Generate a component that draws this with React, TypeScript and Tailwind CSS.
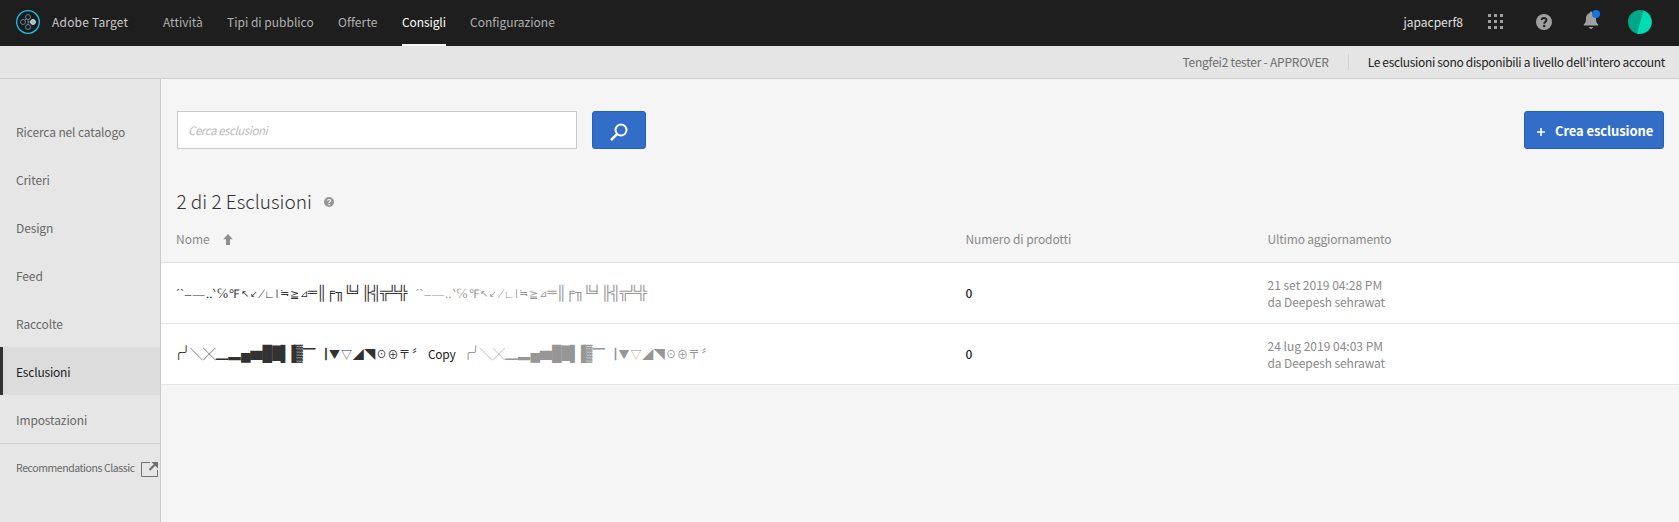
const nav = [
  { label: 'Attività', cls: 'w-[40px] text-[#b0b0b0]' },
  { label: 'Tipi di pubblico', cls: 'w-[87px] text-[#b0b0b0]' },
  { label: 'Offerte', cls: 'w-[40px] tracking-[0.1px] text-[#b0b0b0]' },
  { label: 'Consigli', cls: 'w-[44px] tracking-[-0.1px] text-white shadow-[inset_0_-2px_0_#f5f5f5]' },
  { label: 'Configurazione', cls: 'w-[87px] text-[#b0b0b0]' },
];

const sideItems = ['Ricerca nel catalogo', 'Criteri', 'Design', 'Feed', 'Raccolte', 'Esclusioni', 'Impostazioni'];

type Cell = [string, string];

const serif = "font-['Liberation_Serif',serif]";
const mono = "font-['Liberation_Mono',monospace] text-[15px]";
const block = "font-['Liberation_Mono',monospace] text-[16px]";
const wide = 'text-[12.5px]';

const symbolsA: Cell[] = [
  ['ˊ', `w-[4px] text-[12px] ${serif}`],
  ['ˋ', `w-[4px] text-[12px] ${serif}`],
  ['–', `w-[8px] text-[13px] ${serif}`],
  ['—', `w-[13px] text-[12px] ${serif}`],
  ['‥', `w-[7.5px] text-[12px] ${serif}`],
  ['‵', `w-[4px] text-[13px] ${serif}`],
  ['℅', `w-[12px] text-[14px] ${serif}`],
  ['℉', `w-[11.5px] text-[12px] ${serif}`],
  ['↖', `w-[9.5px] text-[9.5px] ${serif}`],
  ['↙', `w-[8.5px] text-[9px] ${serif}`],
  ['∕', `w-[7px] text-[13px] ${serif}`],
  ['∟', `w-[9.5px] text-[11px] ${serif}`],
  ['∣', 'w-[5px] text-[12px]'],
  ['≒', `w-[9.5px] text-[10.5px] ${serif}`],
  ['≧', `w-[10px] text-[11px] ${serif}`],
  ['⊿', `w-[9px] text-[10px] ${serif}`],
  ...[...'═║╒╖╚╛╟╣╦╩╬'].map((c): Cell => [c, `w-[9px] ${mono}`]),
];

const symbolsB: Cell[] = [
  ['╭', "-ml-[1px] w-[7.4px] font-['Liberation_Mono',monospace] text-[12.3px]"],
  ['╯', "w-[7.4px] font-['Liberation_Mono',monospace] text-[12.3px]"],
  ['╲', `w-[13px] ${wide}`],
  ['╳', `w-[13px] ${wide}`],
  ['▁', `w-[12.5px] ${wide}`],
  ['▂', `w-[12.5px] ${wide}`],
  ['▄', `w-[10px] ${block}`],
  ['▆', `w-[11.5px] ${wide}`],
  ['█', `w-[10px] ${block}`],
  ['▇', "w-[9px] font-['Liberation_Mono',monospace] text-[15px]"],
  ['▌', `w-[8px] ${block}`],
  ['▐', `w-[4px] ${block}`],
  ['▓', `w-[9.6px] ${block}`],
  ['▔', `w-[12.5px] ${wide}`],
  ['▕', 'w-[10px] text-[12.5px]'],
  ['▼', 'ml-[3px] w-[12px] text-[11px]'],
  ['▽', 'w-[12px] text-[11px]'],
  ['◢', 'w-[11.5px] text-[11px]'],
  ['◥', 'w-[11.5px] text-[11px]'],
  ['☉', 'w-[12px] text-[12px]'],
  ['⊕', 'w-[11px] text-[11px]'],
  ['〒', 'w-[12px] text-[12px]'],
  ['〞', 'ml-[3px] w-[10px] text-[13px]'],
];

function Symbols({ cells, className }: { cells: Cell[]; className: string }) {
  return (
    <span className={`flex h-5 items-center ${className}`}>
      {cells.map(([char, cls]) => (
        <span key={char} className={`flex shrink-0 justify-center leading-5 ${cls}`}>
          <span className="whitespace-nowrap">{char}</span>
        </span>
      ))}
    </span>
  );
}

function HelpIcon({ className, mark }: { className: string; mark: string }) {
  return (
    <svg viewBox="0 0 16 16" className={className}>
      <circle cx="8" cy="8" r="8" fill="currentColor" />
      <path d="M5.6 6C5.6 3.3 10.5 3.3 10.5 6C10.5 7.7 8.2 7.7 8.2 9.7" fill="none" stroke={mark} strokeWidth="1.9" />
      <rect x="7.1" y="10.9" width="2.2" height="2.2" fill={mark} />
    </svg>
  );
}

function TargetLogo() {
  return (
    <svg viewBox="0 0 24 24" className="-mt-0.5 size-6" fill="none">
      <circle cx="12" cy="12" r="11.3" fill="#111d22" stroke="#1cc4e8" strokeWidth="1.3" />
      <g stroke="#8d9598" strokeWidth="0.8">
        <circle cx="12" cy="7" r="2.5" />
        <circle cx="7" cy="12" r="2.5" />
        <circle cx="12" cy="17" r="2.5" />
        <path d="M12 9.5v5M8.8 10.3l1.6-1.7M14.5 12h-2.5" />
      </g>
      <circle cx="17" cy="12" r="2.4" fill="#9fb6c0" stroke="#dce8ed" />
    </svg>
  );
}

function Header() {
  return (
    <header className="flex h-[46px] items-center bg-[#1e1e1e] pl-4 pr-[27px] text-[12px]">
      <TargetLogo />
      <span className="ml-3 w-[111px] pb-0.5 tracking-[0.2px] text-[#cacaca]">Adobe Target</span>
      <nav className="flex h-full gap-6">
        {nav.map((n) => (
          <a key={n.label} className={`flex h-full items-center whitespace-nowrap pb-0.5 ${n.cls}`}>{n.label}</a>
        ))}
      </nav>
      <span className="ml-auto pb-0.5 text-[#e0e0e0]">japacperf8</span>
      <svg viewBox="0 0 15 15" className="-mt-[3px] ml-[25px] h-[15px] w-[15px]" fill="#a0a0a0">
        {[0, 6, 12].map((y) => [0, 6, 12].map((x) => <rect key={`${x}-${y}`} x={x} y={y} width="3" height="3" />))}
      </svg>
      <HelpIcon className="-mt-0.5 ml-[33px] size-4 text-[#a0a0a0]" mark="#1e1e1e" />
      <svg viewBox="0 0 18 20" className="-mt-[6px] ml-[31px] h-5 w-[18px]">
        <path d="M0.8 15.5v-1C2.6 13 3 11.6 3 8.6C3 5.6 4.4 3.8 6.6 3.1C6.6 1 9.4 1 9.4 3.1C11.6 3.8 13 5.6 13 8.6C13 11.6 13.4 13 15.2 14.5v1zM6 17h4C9.8 19.4 6.2 19.4 6 17z" fill="#a0a0a0" />
        <circle cx="13" cy="4" r="4" fill="#1473e6" />
      </svg>
      <svg viewBox="0 0 24 24" className="-mt-0.5 ml-[27px] size-6">
        <circle cx="12" cy="12" r="12" fill="#00a888" />
        <path d="M15.6 0.6A12 12 0 0 1 9 23.6z" fill="#00dcb4" />
      </svg>
    </header>
  );
}

function Sidebar() {
  return (
    <aside className="w-[161px] shrink-0 border-r border-[#cbcbcb] bg-[#e6e6e6] pt-7 text-[12px] tracking-[-0.12px] text-[#686868]">
      {sideItems.map((label) => (
        <a
          key={label}
          className={`flex h-12 items-center whitespace-nowrap pt-px ${
            label === 'Esclusioni' ? 'border-l-[3px] border-[#323232] bg-[#dcdcdc] pl-[13px] tracking-[-0.2px] text-[#222]' : 'pl-4'
          }`}
        >
          {label}
        </a>
      ))}
      <div className="flex h-[50px] items-center border-t border-[#d2d2d2] pl-4">
        <span className="w-[125px] whitespace-nowrap pb-0.5 text-[10.5px] tracking-[-0.42px]">Recommendations Classic</span>
        <svg viewBox="0 0 17 15" className="mt-px h-[15px] w-[17px] shrink-0" fill="none" stroke="#707070">
          <path d="M9 0.5H0.5v14h16V8" />
          <path d="M8.5 8L14 2.5" strokeWidth="2.2" />
          <path d="M10.5 0H17v6.5z" fill="#707070" stroke="none" />
        </svg>
      </div>
    </aside>
  );
}

const columns = 'grid grid-cols-[789.5px_302px_1fr] pl-[15px]';

function Updated({ date }: { date: string }) {
  return (
    <div className="leading-[17px] text-[#8a8a8a]">
      {date}
      <br />
      <span className="tracking-[-0.1px]">da Deepesh sehrawat</span>
    </div>
  );
}

export default function App() {
  return (
    <div className="flex h-[522px] flex-col overflow-hidden bg-[#f5f5f5] font-['Noto_Sans_CJK_SC',sans-serif] leading-5">
      <Header />
      <div className="flex h-[33px] items-center justify-end border-b border-[#cfcfcf] bg-[#e5e5e5] pr-[14px] text-[12px]">
        <span className="tracking-[-0.23px] text-[#6e6e6e]">Tengfei2 tester - APPROVER</span>
        <span className="ml-[19px] mr-[19px] h-4 w-px bg-[#d0d0d0]" />
        <span className="tracking-[-0.33px] text-[#222]">Le esclusioni sono disponibili a livello dell'intero account</span>
      </div>
      <div className="flex grow">
        <Sidebar />
        <main className="grow text-[12px]">
          <div className="flex h-[70px] items-end pl-4 pr-[15px]">
            <div className="flex h-[38px] w-[400px] items-center border border-[#cacaca] bg-white pl-[10px] text-[11.5px] italic tracking-[-0.45px] text-[#bcbcbc]">
              Cerca esclusioni
            </div>
            <button className="ml-[15px] flex h-[38px] w-[54px] items-center justify-center rounded-[3px] border border-[#2360b8] bg-[#326ec8] pt-1">
              <svg viewBox="0 0 18 18" className="size-[18px]" fill="none" stroke="white" strokeWidth="2">
                <circle cx="11" cy="7" r="5.5" />
                <path d="M7 11.2L1 17.2" strokeWidth="2.4" />
              </svg>
            </button>
            <button className="ml-auto flex h-[38px] w-[140px] items-center whitespace-nowrap rounded-[3px] border border-[#2360b8] bg-[#326ec8] pl-3 pt-0.5 text-[13px] font-bold tracking-[-0.1px] text-white">
              <svg viewBox="0 0 8 8" className="mr-[10px] mt-0.5 size-2" stroke="white" strokeWidth="1.6">
                <path d="M4 0v8M0 4h8" />
              </svg>
              <span>Crea esclusione</span>
            </button>
          </div>
          <div className="flex items-center pl-[15.5px] pt-10 text-[#323232]">
            <h1 className="text-[19px] font-light leading-6">2 di 2 Esclusioni</h1>
            <HelpIcon className="ml-[12.5px] mt-px size-[10px] text-[#969696]" mark="#f5f5f5" />
          </div>
          <div className={`${columns} mt-[16px] h-[34px] border-b border-[#e0e0e0] text-[#8a8a8a]`}>
            <span className="flex h-5 items-center">
              Nome
              <svg viewBox="0 0 10 11" className="ml-[13px] h-[11px] w-[10px]" fill="#8e8e8e">
                <path d="M5 0L9.8 5.2H7V11H3V5.2H0.2z" />
              </svg>
            </span>
            <span className="tracking-[-0.1px]">Numero di prodotti</span>
            <span className="tracking-[-0.17px]">Ultimo aggiornamento</span>
          </div>
          <div className={`${columns} h-[61px] items-center border-b border-[#e6e6e6] bg-white`}>
            <div className="flex items-center pt-0.5">
              <Symbols cells={symbolsA} className="text-[#323232]" />
              <Symbols cells={symbolsA} className="ml-[8.5px] text-[#969696]" />
            </div>
            <span className="font-medium text-[#222]">0</span>
            <Updated date="21 set 2019 04:28 PM" />
          </div>
          <div className={`${columns} h-[61px] items-center border-b border-[#e6e6e6] bg-white`}>
            <div className="flex items-center">
              <Symbols cells={symbolsB} className="w-[252px] text-[#323232]" />
              <span className="w-[37.5px] tracking-[-0.3px] text-[#222]">Copy</span>
              <Symbols cells={symbolsB} className="text-[#969696]" />
            </div>
            <span className="font-medium text-[#222]">0</span>
            <Updated date="24 lug 2019 04:03 PM" />
          </div>
        </main>
      </div>
    </div>
  );
}
